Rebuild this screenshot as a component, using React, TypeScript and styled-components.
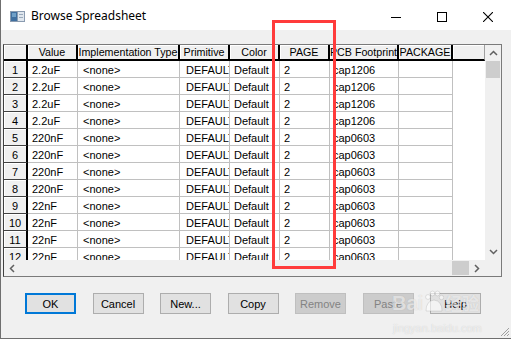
import React from 'react';
import styled, { createGlobalStyle } from 'styled-components';

const GlobalStyle = createGlobalStyle`
  html, body {
    margin: 0;
    padding: 0;
    background: #ffffff;
  }
  body {
    font-family: "Liberation Sans", Arial, sans-serif;
    font-size: 11px;
    color: #000;
  }
`;

const COLS = '24px 50px 102px 50px 50px 50px 69px 54px 1fr';

const headers = ['Value', 'Implementation Type', 'Primitive', 'Color', 'PAGE', 'PCB Footprint', 'PACKAGE'];

const rows = [
  ['2.2uF', 'cap1206'],
  ['2.2uF', 'cap1206'],
  ['2.2uF', 'cap1206'],
  ['2.2uF', 'cap1206'],
  ['220nF', 'cap0603'],
  ['220nF', 'cap0603'],
  ['220nF', 'cap0603'],
  ['220nF', 'cap0603'],
  ['22nF', 'cap0603'],
  ['22nF', 'cap0603'],
  ['22nF', 'cap0603'],
  ['22nF', 'cap0603'],
];

const buttons: { label: string; kind?: 'default' | 'disabled' }[] = [
  { label: 'OK', kind: 'default' },
  { label: 'Cancel' },
  { label: 'New...' },
  { label: 'Copy' },
  { label: 'Remove', kind: 'disabled' },
  { label: 'Paste', kind: 'disabled' },
  { label: 'Help' },
];

const App = () => {
  return (
    <>
      <GlobalStyle />
      <Window>
        <TitleBar>
          <AppIcon width="15" height="11" viewBox="0 0 15 11">
            <rect x="0" y="0" width="15" height="11" fill="#8a9bb0" />
            <rect x="1" y="1" width="6" height="9" fill="#3f6f9f" />
            <rect x="2" y="2" width="4" height="4" fill="#6fa0c8" />
            <rect x="8" y="1" width="6" height="9" fill="#dfe6ee" />
            <rect x="9" y="3" width="4" height="1" fill="#9aaabb" />
            <rect x="9" y="6" width="4" height="1" fill="#9aaabb" />
          </AppIcon>
          <Title>Browse Spreadsheet</Title>
          <Controls>
            <CtrlButton>
              <svg width="10" height="10" viewBox="0 0 10 10">
                <line x1="0" y1="5.5" x2="10" y2="5.5" stroke="#000" strokeWidth="1" />
              </svg>
            </CtrlButton>
            <CtrlButton>
              <svg width="10" height="10" viewBox="0 0 10 10">
                <rect x="0.5" y="0.5" width="9" height="9" fill="none" stroke="#000" strokeWidth="1" />
              </svg>
            </CtrlButton>
            <CtrlButton>
              <svg width="10" height="10" viewBox="0 0 10 10">
                <path d="M0 0 L10 10 M10 0 L0 10" stroke="#000" strokeWidth="1.1" />
              </svg>
            </CtrlButton>
          </Controls>
        </TitleBar>

        <Body>
          <Grid>
            <TableArea>
              <Row>
                <HeadCell />
                {headers.map(h => (
                  <HeadCell key={h}><span>{h}</span></HeadCell>
                ))}
                <HeadCell />
              </Row>
              {rows.map((r, i) => (
                <Row key={i}>
                  <RowHead>{i + 1}</RowHead>
                  <Cell>{r[0]}</Cell>
                  <Cell $pad={5}>&lt;none&gt;</Cell>
                  <Cell $pad={6}>DEFAULT</Cell>
                  <Cell>Default</Cell>
                  <Cell>2</Cell>
                  <Cell $pad={3}>{r[1]}</Cell>
                  <Cell />
                  <Filler />
                </Row>
              ))}
            </TableArea>
            <VScroll>
              <Arrow>
                <svg width="9" height="6" viewBox="0 0 9 6">
                  <path d="M1 5 L4.5 1.5 L8 5" fill="none" stroke="#606060" strokeWidth="1.5" />
                </svg>
              </Arrow>
              <VThumb />
              <Track />
              <Arrow>
                <svg width="9" height="6" viewBox="0 0 9 6">
                  <path d="M1 1 L4.5 4.5 L8 1" fill="none" stroke="#606060" strokeWidth="1.5" />
                </svg>
              </Arrow>
            </VScroll>
            <HScroll>
              <Arrow>
                <svg width="6" height="9" viewBox="0 0 6 9">
                  <path d="M5 1 L1.5 4.5 L5 8" fill="none" stroke="#606060" strokeWidth="1.5" />
                </svg>
              </Arrow>
              <Track />
              <HThumb />
              <Arrow>
                <svg width="6" height="9" viewBox="0 0 6 9">
                  <path d="M1 1 L4.5 4.5 L1 8" fill="none" stroke="#606060" strokeWidth="1.5" />
                </svg>
              </Arrow>
            </HScroll>
            <Corner />
          </Grid>

          <ButtonRow>
            {buttons.map(b => (
              <Button key={b.label} $kind={b.kind}>{b.label}</Button>
            ))}
          </ButtonRow>
        </Body>

        <Grip width="10" height="10" viewBox="0 0 10 10">
          <path d="M9 1 L1 9 M9 4 L4 9 M9 7 L7 9" stroke="#a0a0a0" strokeWidth="1" />
        </Grip>

        <Watermark>
          <Brand>
            Bai
            <Paw width="20" height="22" viewBox="0 0 20 22">
              <circle cx="4" cy="7" r="2.4" />
              <circle cx="8.5" cy="3.5" r="2.4" />
              <circle cx="13.5" cy="3.5" r="2.4" />
              <circle cx="17.5" cy="7.5" r="2.2" />
              <path d="M2 21 Q2 11 10 10 Q18 11 18 21 Z" />
            </Paw>
            <Cjk>经验</Cjk>
          </Brand>
          <Site>jingyan.baidu.com</Site>
        </Watermark>

        <Highlight />
      </Window>
    </>
  );
};

const Window = styled.div`
  position: relative;
  width: 510px;
  height: 338px;
  border-left: 1px solid #6f6f6f;
  border-bottom: 1px solid #6f6f6f;
  background: #f0f0f0;
  box-shadow: 0 3px 6px rgba(0, 0, 0, 0.18);
  display: flex;
  flex-direction: column;
`;

const TitleBar = styled.div`
  height: 30px;
  background: #ffffff;
  display: flex;
  align-items: center;
  padding-left: 9px;
  flex-shrink: 0;
`;

const AppIcon = styled.svg`
  display: block;
  margin-top: 2px;
`;

const Title = styled.div`
  font-family: "Noto Sans", "Open Sans", sans-serif;
  font-size: 12px;
  margin-left: 6px;
  margin-top: 1px;
  color: #000;
`;

const Controls = styled.div`
  margin-left: auto;
  display: flex;
  height: 100%;
`;

const CtrlButton = styled.div`
  width: 46px;
  height: 100%;
  display: flex;
  align-items: center;
  justify-content: center;
  svg { display: block; margin-top: 3px; }
`;

const Body = styled.div`
  flex: 1;
  padding: 14px 9px 0 2px;
  display: flex;
  flex-direction: column;
`;

const Grid = styled.div`
  width: 497px;
  height: 231px;
  border: 1px solid #7a7a7a;
  border-left: 1px solid #404040;
  display: grid;
  grid-template-columns: 481px 16px;
  grid-template-rows: 215px 16px;
  background: #f0f0f0;
`;

const TableArea = styled.div`
  background: #ffffff;
  overflow: hidden;
`;

const Row = styled.div`
  display: grid;
  grid-template-columns: ${COLS};
`;

const HeadCell = styled.div`
  height: 16px;
  box-sizing: border-box;
  background: #f0f0f0;
  border-right: 2px solid #000;
  border-bottom: 2px solid #000;
  box-shadow: inset 1px 1px 0 #ffffff;
  display: flex;
  align-items: center;
  justify-content: center;
  overflow: hidden;
  white-space: nowrap;
  span { flex-shrink: 0; font-size: 10.7px; }
  &:last-child { border-right: 1px solid #a0a0a0; }
`;

const RowHead = styled.div`
  height: 17px;
  box-sizing: border-box;
  background: #f0f0f0;
  border-right: 2px solid #000;
  border-bottom: 1px solid #404040;
  box-shadow: inset 1px 1px 0 #ffffff;
  display: flex;
  align-items: center;
  justify-content: center;
  padding-top: 1px;
`;

const Cell = styled.div<{ $pad?: number }>`
  height: 17px;
  box-sizing: border-box;
  border-right: 1px solid #c0c0c0;
  border-bottom: 1px solid #c0c0c0;
  padding-left: ${p => p.$pad ?? 4}px;
  padding-top: 1px;
  display: flex;
  align-items: center;
  overflow: hidden;
  white-space: nowrap;
`;

const Filler = styled.div`
  height: 17px;
`;

const VScroll = styled.div`
  display: flex;
  flex-direction: column;
  background: #f0f0f0;
`;

const HScroll = styled.div`
  display: flex;
  background: #f0f0f0;
`;

const Arrow = styled.div`
  width: 16px;
  height: 16px;
  flex-shrink: 0;
  display: flex;
  align-items: center;
  justify-content: center;
`;

const Track = styled.div`
  flex: 1;
`;

const VThumb = styled.div`
  height: 17px;
  margin: 0 1px;
  background: #cdcdcd;
`;

const HThumb = styled.div`
  width: 17px;
  margin: 1px 0;
  background: #cdcdcd;
`;

const Corner = styled.div`
  background: #f0f0f0;
`;

const ButtonRow = styled.div`
  display: flex;
  gap: 16.5px;
  padding-left: 22px;
  margin-top: 16px;
`;

const Button = styled.div<{ $kind?: 'default' | 'disabled' }>`
  width: 51px;
  height: 21px;
  box-sizing: border-box;
  display: flex;
  align-items: center;
  justify-content: center;
  padding-top: 1px;
  background: ${p => (p.$kind === 'disabled' ? '#cccccc' : '#e1e1e1')};
  border: ${p =>
    p.$kind === 'default'
      ? '2px solid #0078d7'
      : p.$kind === 'disabled'
      ? '1px solid #bfbfbf'
      : '1px solid #adadad'};
  color: ${p => (p.$kind === 'disabled' ? '#838383' : '#000')};
`;

const Grip = styled.svg`
  position: absolute;
  right: 1px;
  bottom: 1px;
`;

const Watermark = styled.div`
  position: absolute;
  left: 391px;
  top: 290px;
  white-space: nowrap;
  color: rgba(255, 255, 255, 0.6);
  text-shadow: 0 0 1px rgba(110, 110, 110, 0.3);
  pointer-events: none;
`;

const Brand = styled.div`
  display: flex;
  align-items: flex-end;
  font-family: "Liberation Sans", sans-serif;
  font-weight: bold;
  font-size: 20px;
  line-height: 24px;
`;

const Cjk = styled.span`
  font-family: "Noto Sans CJK SC", sans-serif;
  font-size: 17px;
  line-height: 24px;
`;

const Paw = styled.svg`
  fill: rgba(255, 255, 255, 0.6);
  stroke: rgba(110, 110, 110, 0.3);
  stroke-width: 0.6;
  margin: 0 1px 3px 1px;
`;

const Site = styled.div`
  font-family: "Liberation Sans", sans-serif;
  font-size: 11px;
  margin-top: 7px;
  margin-left: 1px;
`;

const Highlight = styled.div`
  position: absolute;
  left: 271px;
  top: 20px;
  width: 64px;
  height: 249px;
  box-sizing: border-box;
  border: 3px solid #ff3b3b;
  pointer-events: none;
`;

export default App;
